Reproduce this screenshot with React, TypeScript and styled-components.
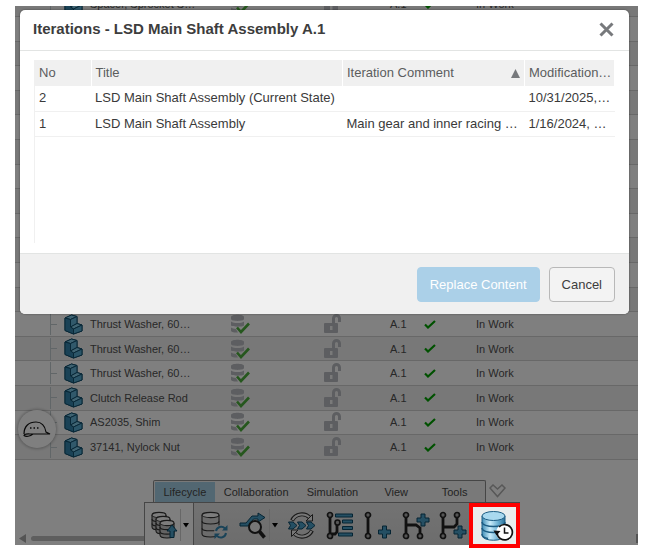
import React from "react";
import styled, { createGlobalStyle } from "styled-components";

const GlobalStyle = createGlobalStyle`
  * { box-sizing: border-box; }
  body {
    margin: 0;
    background: #fff;
    font-family: "Liberation Sans", Arial, sans-serif;
    color: #333;
  }
  button { font: inherit; color: inherit; }
`;

const Page = styled.main`
  padding: 6px 9px 12px 15px;
`;

const Workspace = styled.div`
  position: relative;
  background: #fff;
`;

/* ---------- Background part list ---------- */

const ListViewport = styled.div`
  height: 454px;
  overflow: hidden;
  display: flex;
  align-items: flex-end;
`;

const PartTable = styled.table`
  width: 100%;
  height: 468px;
  flex: none;
  table-layout: fixed;
  border-collapse: collapse;
  font-size: 11px;
  color: #505050;

  td {
    height: 24px;
    padding: 0;
    border-bottom: 1px solid #d0d0d0;
    white-space: nowrap;
    vertical-align: middle;
  }
  svg { display: block; }
`;

const PartRow = styled.tr<{ $shaded: boolean }>`
  background: ${(p) => (p.$shaded ? "#f1f1f1" : "#ffffff")};
`;

const Branch = styled.div`
  width: 7px;
  height: 22px;
  border-left: 1px solid #c3cdd0;
  display: flex;
  align-items: center;
  &::after {
    content: "";
    flex: 1;
    height: 1px;
    background: #c3cdd0;
  }
`;

const BranchCell = styled.td`
  && { padding-left: 35px; }
`;

const Below = styled.div`
  height: 20px;
`;

/* ---------- Action bar ---------- */

const ActionBar = styled.div`
  display: flex;
  align-items: flex-end;
  height: 65px;
`;

const ScrollTrack = styled.div`
  width: 129px;
  display: flex;
  align-items: center;
  gap: 5px;
  padding: 0 0 2px 4px;
`;

const ArrowMark = styled.svg`
  flex: none;
  display: block;
`;

const ScrollThumb = styled.div`
  flex: 1;
  height: 5px;
  border-radius: 3px 0 0 3px;
  background: #bcbcbc;
`;

const EndArrow = styled.div`
  margin-left: auto;
  padding-bottom: 2px;
`;

const Sections = styled.div`
  display: flex;
  flex-direction: column;
`;

const TabLine = styled.div`
  display: flex;
  align-items: center;
  gap: 3px;
  padding-left: 9px;
`;

const TabList = styled.div`
  display: flex;
  width: 333px;
  height: 22px;
  padding: 1px 1px 0;
  border: 1px solid #8c8c8c;
  border-bottom: 0;
  border-radius: 2px 2px 0 0;
  background: #f2f2f2;
`;

const Tab = styled.button<{ $active?: boolean; $width: number }>`
  width: ${(p) => p.$width}px;
  border: 0;
  padding: 0;
  background: ${(p) => (p.$active ? "#a5cfe4" : "transparent")};
  font-size: 11px;
  line-height: 18px;
  text-align: center;
  color: #484848;
`;

const MoreButton = styled.button`
  border: 0;
  padding: 0;
  background: none;
  display: flex;
`;

const Tools = styled.div`
  display: grid;
  grid-template-columns: 50px 39px 49px 38px 38px 38px 38px 35px 51px;
  grid-template-rows: 42px;
  height: 43px;
  border-top: 1px solid #8c8c8c;
  background: linear-gradient(#e6e6e6, #dadada);
`;

const ToolButton = styled.button<{ $raised?: boolean }>`
  display: flex;
  align-items: center;
  justify-content: center;
  gap: 2px;
  border: 0;
  padding: 2px 0 0 2px;
  background: ${(p) => (p.$raised ? "#ffffff" : "transparent")};
  border-left: ${(p) => (p.$raised ? "1px solid #8c8c8c" : "0")};
  border-right: ${(p) => (p.$raised ? "1px solid #8c8c8c" : "0")};
`;

const Divider = styled.span`
  width: 1px;
  height: 32px;
  background: #cfcfcf;
`;

const HighlightedTool = styled.button`
  position: relative;
  z-index: 3;
  height: 45px;
  display: flex;
  align-items: center;
  justify-content: center;
  border: 4px solid #fe0000;
  padding: 2px 0 0 6px;
  background: #e9eded;
`;

const Advisor = styled.button`
  position: absolute;
  left: 3px;
  bottom: 97px;
  width: 38px;
  height: 38px;
  border: 0;
  border-radius: 50%;
  padding: 0;
  display: flex;
  align-items: center;
  justify-content: center;
  background: #fff;
  box-shadow: 0 0 3px 1px rgba(0, 0, 0, 0.25);
`;

/* ---------- Dialog ---------- */

const Backdrop = styled.div`
  position: absolute;
  inset: 0;
  z-index: 2;
  padding: 4px 9px 0 5px;
  background: rgba(0, 0, 0, 0.5);
`;

const Dialog = styled.section`
  border-radius: 5px;
  overflow: hidden;
  background: #fff;
  box-shadow: 0 0 2px rgba(0, 0, 0, 0.5);
`;

const DialogHeader = styled.header`
  display: flex;
  align-items: center;
  justify-content: space-between;
  height: 41px;
  padding: 0 15px 3px 13px;
  border-bottom: 1px solid #e2e4e3;
`;

const DialogTitle = styled.h1`
  margin: 0;
  font-size: 15px;
  line-height: 20px;
  color: #3d3d3d;
`;

const CloseButton = styled.button`
  display: flex;
  border: 0;
  padding: 2px 0 0;
  background: none;
`;

const DialogBody = styled.div`
  padding: 9px 14px 10px;
`;

const GridArea = styled.div`
  min-height: 183px;
  border-left: 1px solid #f0f0f0;
`;

const IterationTable = styled.table`
  width: 100%;
  table-layout: fixed;
  border-collapse: collapse;
  font-size: 13px;
  line-height: 16px;

  th, td {
    overflow: hidden;
    white-space: nowrap;
    text-align: left;
    font-weight: 400;
    padding: 4px 0 4px 4px;
  }
  th {
    height: 26px;
    background: #f0f0f0;
    color: #5b5d5e;
    border-right: 1px solid #fff;
  }
  td {
    height: 25px;
    border-bottom: 1px solid #f0f0f0;
    color: #3a3a3a;
  }
`;

const SortHeader = styled.div`
  display: flex;
  align-items: center;
  justify-content: space-between;
  padding-right: 4px;
`;

const DialogFooter = styled.footer`
  display: flex;
  justify-content: flex-end;
  gap: 9px;
  padding: 13px 14px 12px;
  border-top: 1px solid #e2e4e3;
  background: #f0f0f0;
`;

const ActionButton = styled.button<{ $primary?: boolean }>`
  height: 35px;
  padding: 0 12px;
  border: 1px solid ${(p) => (p.$primary ? "#abd0e8" : "#b8b8b8")};
  border-radius: 4px;
  background: ${(p) => (p.$primary ? "#abd0e8" : "#f3f3f3")};
  color: ${(p) => (p.$primary ? "#ffffff" : "#3d3d3d")};
  font-size: 13px;
`;

/* ---------- Icons ---------- */

const INK = "#222";
const BLUE = "#4b9fc6";
const NAVY = "#0b4866";

const PartIcon = () => (
  <svg width="19" height="21" viewBox="0 0 19 21" stroke="#12506f" strokeWidth="1" strokeLinejoin="round">
    <path d="M1 4 7.500 1 13 2.500v7l5 1.500v6L9.500 20 1 16.500z" fill="#2d7ca3" />
    <path d="M1 4 7.500 1 13 2.500 6.500 5.500z" fill="#7cc4e2" />
    <path d="M6.500 5.500 13 2.500v7l-6.500 3.500z" fill="#62b2d6" />
    <path d="m6.500 13 6.500-3.500 5 1.500-8.500 4z" fill="#83cae6" />
    <path d="M1 4 6.500 5.500V13l3 2v5L1 16.500z" fill="#3585ac" />
    <path d="M9.500 15 18 11v6l-8.500 3z" fill="#57abd0" />
  </svg>
);

const SavedIcon = () => (
  <svg width="19" height="20" viewBox="0 0 19 20">
    <path d="M0 3c0-3 13-3 13 0v2c0 2.500-13 2.500-13 0z" fill="#babdc2" />
    <path d="M0 7.500c3 2 10 2 13 0v4c-1 1.600-12 1.600-13 0z" fill="#babdc2" />
    <path d="M0 13.500c1 .800 3 1.300 5 1.400l2 3.600c-4 .300-7-.500-7-1.800z" fill="#babdc2" />
    <path d="m6 13.500 4 4.500 8-8.500" fill="none" stroke="#4cae3c" strokeWidth="2.600" />
  </svg>
);

const UnlockIcon = () => (
  <svg width="18" height="20" viewBox="0 0 18 20">
    <path d="M9.500 10V4.500a3 3 0 0 1 6 0V8" fill="none" stroke="#babdc2" strokeWidth="3" />
    <rect x="0" y="9" width="14" height="10" rx="1" fill="#babdc2" />
    <path d="M6 12h2.500v4H6z" fill="#f4f4f4" />
  </svg>
);

const TickIcon = () => (
  <svg width="12" height="9" viewBox="0 0 12 9">
    <path d="m1 4.500 3 3L11 1" fill="none" stroke="#00a200" strokeWidth="2.200" />
  </svg>
);

const Caret = () => (
  <svg width="6" height="5" viewBox="0 0 6 5">
    <path d="M0 0h6L3 4.500z" fill="#000" />
  </svg>
);

const Cylinder = ({ x, y, fill = "#c6c6c6", line = "#333", w = 14, h = 18 }: {
  x: number; y: number; fill?: string; line?: string; w?: number; h?: number;
}) => (
  <g transform={`translate(${x} ${y})`} stroke={line} strokeWidth="1.100">
    <path d={`M0 3v${h - 6}c0 4 ${w} 4 ${w} 0V3`} fill={fill} />
    <ellipse cx={w / 2} cy="3" rx={w / 2} ry="2.600" fill="#fafafa" />
    <path d={`M0 ${h / 3 + 1}c0 3.500 ${w} 3.500 ${w} 0M0 ${(h * 2) / 3 - 0.5}c0 3.500 ${w} 3.500 ${w} 0`} fill="none" />
  </g>
);

const StackIcon = () => (
  <svg width="27" height="29" viewBox="0 0 27 29">
    <Cylinder x={1} y={1} />
    <Cylinder x={5} y={5} />
    <Cylinder x={9} y={9} />
    <path d="m21 14 5 6h-3v6.500h-4V20h-3z" fill={BLUE} stroke={NAVY} />
  </svg>
);

const RefreshIcon = () => (
  <svg width="28" height="29" viewBox="0 0 28 29">
    <Cylinder x={1} y={1} w={17} h={25} fill="#d8d8d8" />
    <circle cx="20" cy="21" r="7" fill="#e0e0e0" />
    <path d="M15 20a5.200 5.200 0 0 1 9-2.500M25 22a5.200 5.200 0 0 1-9 2.800" fill="none" stroke="#3486b0" strokeWidth="2" />
    <path d="M26.500 14v5.500H21zM13.500 28v-5.500H19z" fill="#3486b0" />
  </svg>
);

const ExploreIcon = () => (
  <svg width="28" height="29" viewBox="0 0 28 29">
    <path d="M1 12h6l6-7h6V2l7 4.500L19 11V8h-4.500L9 15H1z" fill={BLUE} stroke={NAVY} />
    <circle cx="16" cy="16" r="6" fill="#ededed" stroke={INK} strokeWidth="2" />
    <path d="m20.500 20.500 5 6" stroke={INK} strokeWidth="3.600" />
  </svg>
);

const CycleIcon = () => (
  <svg width="28" height="29" viewBox="0 0 28 29">
    <g fill="none">
      <path d="M4 9.500a11 11 0 0 1 18-2.500M24 19.500a11 11 0 0 1-18 2.500" stroke="#333" strokeWidth="4" />
      <path d="M4.500 9a11 11 0 0 1 18-1.500M23.500 20a11 11 0 0 1-18 1.500" stroke="#eee" strokeWidth="2" />
    </g>
    <path d="M24.500 3.500V10H18zM3.500 25.500V19H10z" fill="#eee" stroke="#333" strokeWidth="1" />
    {[0, 9, 18].map((x) => (
      <path key={x} d={`M${x + 0.5} 11h4.500l4 3.500-4 3.500H${x + 0.5}l2-3.500z`} fill={BLUE} stroke={NAVY} />
    ))}
  </svg>
);

const Graph = ({ d, dots }: { d: string; dots: number[][] }) => (
  <g stroke={INK}>
    <path d={d} fill="none" strokeWidth="2.800" />
    {dots.map(([cx, cy]) => (
      <circle key={`${cx}-${cy}`} cx={cx} cy={cy} r="2.500" fill="#aaa" strokeWidth="1.700" />
    ))}
  </g>
);

const Plus = ({ x, y }: { x: number; y: number }) => (
  <path
    d={`M${x + 4} ${y}h4v4h4v4h-4v4h-4v-4h-4v-4h4z`}
    fill={BLUE}
    stroke={NAVY}
  />
);

const TreeIcon = () => (
  <svg width="28" height="29" viewBox="0 0 28 29">
    <g fill={BLUE} stroke={NAVY}>
      <path d="M9.500 3h17v3h-17zM16.500 9h10v3h-10zM16.500 15.500h10v3h-10zM12.500 22h14v3h-14z" />
    </g>
    <Graph d="M4 4.500v20M4 23h5l2-2v-9" dots={[[4, 4], [4, 25], [11.5, 11.5]]} />
  </svg>
);

const AddNodeIcon = () => (
  <svg width="28" height="29" viewBox="0 0 28 29">
    <Graph d="M4 4.500v20" dots={[[4, 4], [4, 25]]} />
    <Plus x={14.5} y={15} />
  </svg>
);

const AddBranchIcon = () => (
  <svg width="28" height="29" viewBox="0 0 28 29">
    <Graph d="M4 4v21M4 14h10l4 3v8" dots={[[4, 4], [4, 25], [18, 25]]} />
    <Plus x={15} y={3} />
  </svg>
);

const AddLeafIcon = () => (
  <svg width="28" height="29" viewBox="0 0 28 29">
    <Graph d="M4 4v21M4 16h11l3-3V4" dots={[[4, 4], [4, 25], [18, 4]]} />
    <Plus x={15} y={15} />
  </svg>
);

const HistoryIcon = () => (
  <svg width="33" height="33" viewBox="0 0 33 33">
    <defs>
      <linearGradient id="steel">
        <stop offset="0" stopColor="#3f8db6" />
        <stop offset=".35" stopColor="#c9ecfa" />
        <stop offset=".7" stopColor="#69afd2" />
        <stop offset="1" stopColor="#2b7199" />
      </linearGradient>
    </defs>
    <g stroke="#1d5d83">
      <path d="M1 6v19c0 7 23 7 23 0V6" fill="url(#steel)" />
      <ellipse cx="12.500" cy="6" rx="11.500" ry="4.500" fill="#a9d9ef" />
      <path d="M1 12c0 6 23 6 23 0M1 18c0 6 23 6 23 0M1 24c0 2 2 4 6 4.500" fill="none" strokeWidth="1.500" />
    </g>
    <circle cx="23.500" cy="22.500" r="8.500" fill="#fff" />
    <path d="M16 23a7.700 7.700 0 1 0 2-6" fill="none" stroke="#111" strokeWidth="1.700" />
    <path d="m12.500 20.500 7 .500-4 4.500z" fill="#111" />
    <path d="M23.500 17.500v5.500h4" fill="none" stroke="#111" strokeWidth="1.500" />
  </svg>
);

const HelmetIcon = () => (
  <svg width="28" height="18" viewBox="0 0 28 18" fill="none" stroke="#111" strokeWidth="1.200">
    <path d="M1 14C1 6 6 2 13 2c6 0 9 4 10 10l4 2H8c-2 0-7-.500-7 1.500 2 1.500 6 1 9-1.500" />
    <path d="M7 8h1.500M10.500 8H12M14 8h1.500" strokeWidth="1.500" />
  </svg>
);

/* ---------- Data ---------- */

const parts: (string | null)[] = [
  "Spacer, Sprocket S…",
  ...Array<null>(12).fill(null),
  "Thrust Washer, 60…",
  "Thrust Washer, 60…",
  "Thrust Washer, 60…",
  "Clutch Release Rod",
  "AS2035, Shim",
  "37141, Nylock Nut",
];

const iterations = [
  { no: 2, title: "LSD Main Shaft Assembly (Current State)", comment: "", date: "10/31/2025,…" },
  { no: 1, title: "LSD Main Shaft Assembly", comment: "Main gear and inner racing …", date: "1/16/2024, …" },
];

const tabs = [
  { name: "Lifecycle", width: 60 },
  { name: "Collaboration", width: 83 },
  { name: "Simulation", width: 70 },
  { name: "View", width: 58 },
  { name: "Tools", width: 59 },
];

const Col = styled.col<{ $width?: number }>`
  width: ${(p) => (p.$width ? `${p.$width}px` : "auto")};
`;

export default function App() {
  return (
    <Page>
      <GlobalStyle />
      <Workspace>
        <ListViewport>
          <PartTable>
            <colgroup>
              {[49, 26, 141, 93, 66, 34, 52].map((w) => <Col key={w} $width={w} />)}
              <Col />
            </colgroup>
            <tbody>
              {parts.map((name, i) => (
                <PartRow key={i} $shaded={i % 2 === 0}>
                  {name === null ? (
                    <td colSpan={8} />
                  ) : (
                    <>
                      <BranchCell><Branch /></BranchCell>
                      <td><PartIcon /></td>
                      <td>{name}</td>
                      <td><SavedIcon /></td>
                      <td><UnlockIcon /></td>
                      <td>A.1</td>
                      <td><TickIcon /></td>
                      <td>In Work</td>
                    </>
                  )}
                </PartRow>
              ))}
            </tbody>
          </PartTable>
        </ListViewport>
        <Below />
        <ActionBar>
          <ScrollTrack>
            <ArrowMark width="7" height="9" viewBox="0 0 7 9"><path d="M7 0v9L0 4.500z" fill="#a8a8a8" /></ArrowMark>
            <ScrollThumb />
          </ScrollTrack>
          <Sections>
            <TabLine>
              <TabList role="tablist">
                {tabs.map((t, i) => (
                  <Tab key={t.name} role="tab" aria-selected={i === 0} $active={i === 0} $width={t.width}>
                    {t.name}
                  </Tab>
                ))}
              </TabList>
              <MoreButton aria-label="Collapse">
                <svg width="17" height="14" viewBox="0 0 17 14">
                  <path d="M1 4 4 1l4.500 4L13 1l3 3-7.500 8.500z" fill="none" stroke="#b0b0b0" strokeWidth="1.500" />
                </svg>
              </MoreButton>
            </TabLine>
            <Tools>
              <ToolButton $raised aria-label="Save"><StackIcon /><Divider /><Caret /></ToolButton>
              <ToolButton aria-label="Refresh"><RefreshIcon /></ToolButton>
              <ToolButton aria-label="Explore"><ExploreIcon /><Divider /><Caret /></ToolButton>
              <ToolButton aria-label="Change maturity"><CycleIcon /></ToolButton>
              <ToolButton aria-label="Revisions"><TreeIcon /></ToolButton>
              <ToolButton aria-label="New revision"><AddNodeIcon /></ToolButton>
              <ToolButton aria-label="New branch"><AddBranchIcon /></ToolButton>
              <ToolButton aria-label="New revision from"><AddLeafIcon /></ToolButton>
              <HighlightedTool aria-label="Iterations"><HistoryIcon /></HighlightedTool>
            </Tools>
          </Sections>
          <EndArrow>
            <ArrowMark width="2" height="9" viewBox="0 0 2 9"><path d="M0 0h2v9H0z" fill="#a8a8a8" /></ArrowMark>
          </EndArrow>
        </ActionBar>
        <Advisor aria-label="Advisor"><HelmetIcon /></Advisor>
        <Backdrop>
          <Dialog role="dialog" aria-labelledby="dialog-title">
            <DialogHeader>
              <DialogTitle id="dialog-title">Iterations - LSD Main Shaft Assembly A.1</DialogTitle>
              <CloseButton aria-label="Close">
                <svg width="15" height="15" viewBox="0 0 15 15">
                  <path d="m1.500 1.500 12 12m0-12-12 12" stroke="#77797c" strokeWidth="3" />
                </svg>
              </CloseButton>
            </DialogHeader>
            <DialogBody>
              <GridArea>
                <IterationTable>
                  <colgroup>
                    <Col $width={56} />
                    <Col />
                    <Col $width={182} />
                    <Col $width={90} />
                  </colgroup>
                  <thead>
                    <tr>
                      <th>No</th>
                      <th>Title</th>
                      <th aria-sort="ascending">
                        <SortHeader>
                          Iteration Comment
                          <svg width="9" height="9" viewBox="0 0 9 9"><path d="M4.500 0 9 9H0z" fill="#77797c" /></svg>
                        </SortHeader>
                      </th>
                      <th>Modification…</th>
                    </tr>
                  </thead>
                  <tbody>
                    {iterations.map((it) => (
                      <tr key={it.no}>
                        <td>{it.no}</td>
                        <td>{it.title}</td>
                        <td>{it.comment}</td>
                        <td>{it.date}</td>
                      </tr>
                    ))}
                  </tbody>
                </IterationTable>
              </GridArea>
            </DialogBody>
            <DialogFooter>
              <ActionButton $primary>Replace Content</ActionButton>
              <ActionButton>Cancel</ActionButton>
            </DialogFooter>
          </Dialog>
        </Backdrop>
      </Workspace>
    </Page>
  );
}
